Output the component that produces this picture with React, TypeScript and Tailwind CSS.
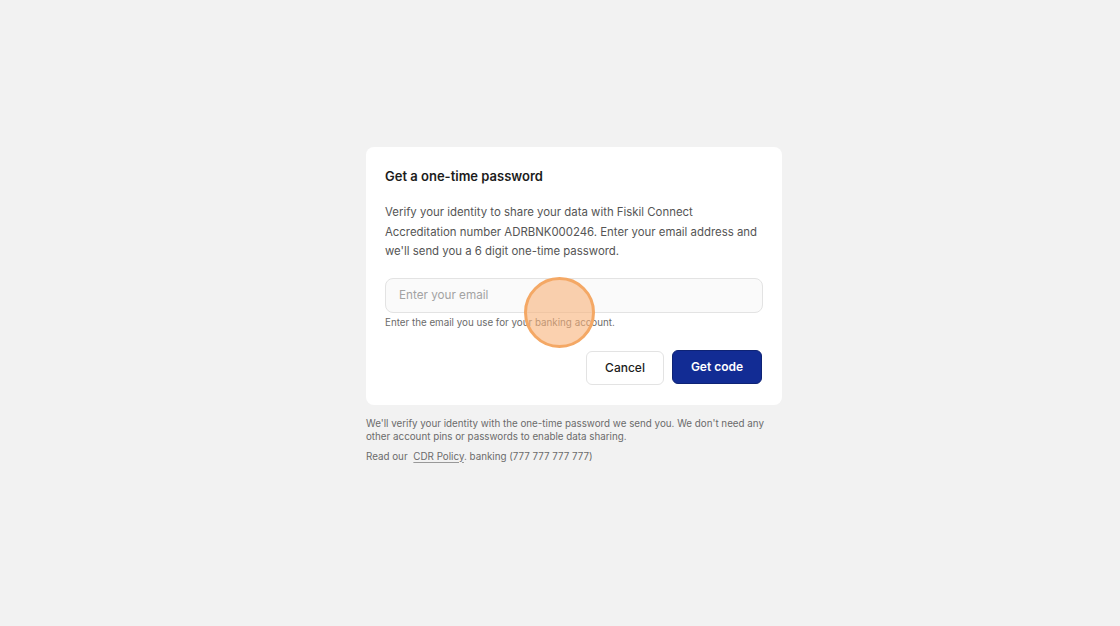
import React from "react";

export default function App() {
  return (
    <div
      className="w-full min-h-[626px] bg-[#f2f2f2] flex justify-center pt-[147px] pl-[28px]"
      style={{ fontFamily: "Inter, 'Noto Sans', sans-serif" }}
    >
      <div className="w-[416px] flex flex-col">
        <div className="bg-white rounded-lg px-[19px] pt-[20px] pb-[20px] flex flex-col">
          <h1 className="text-[13px] leading-[18px] font-semibold text-[#1c1c1c]">
            Get a one-time password
          </h1>
          <p className="mt-[18px] mr-[-8px] text-[11.4px] leading-[19.5px] text-[#555555]">
            Verify your identity to share your data with Fiskil Connect
            <br />
            Accreditation number ADRBNK000246. Enter your email address and we'll send you a 6 digit one-time password.
          </p>
          <div className="relative mt-[16px]">
            <input
              placeholder="Enter your email"
              className="w-full h-[35px] rounded-lg border border-[#e3e3e3] bg-[#fafafa] px-[13px] text-[11.7px] text-[#333] placeholder:text-[#a3a3a3] outline-none"
            />
            <div className="absolute left-[139px] top-[-1px] w-[71px] h-[71px] rounded-full bg-[#f9b27a]/60 border-[3px] border-[#f4a865] pointer-events-none" />
          </div>
          <p className="mt-[2px] text-[9.8px] leading-[16px] text-[#6b6b6b]">
            Enter the email you use for your banking account.
          </p>
          <div className="flex justify-end gap-[8px] mt-[19px] mr-[1px]">
            <button className="w-[78px] h-[34px] mt-[1px] rounded-md border border-[#e3e3e3] bg-white text-[12px] font-medium text-[#1c1c1c]">
              Cancel
            </button>
            <button className="w-[90px] h-[34px] rounded-md bg-[#122c94] border border-[#0e2375] text-[12px] font-semibold text-white">
              Get code
            </button>
          </div>
        </div>
        <p className="mt-[12px] text-[9.8px] leading-[13.5px] text-[#6b6b6b]">
          We'll verify your identity with the one-time password we send you. We don't need any other account pins or
          passwords to enable data sharing.
        </p>
        <p className="mt-[6px] text-[9.8px] leading-[13.5px] text-[#6b6b6b]">
          Read our{" "}
          <a className="ml-[3px] underline underline-offset-2 decoration-[#999]">CDR Policy</a>. banking (777 777 777 777)
        </p>
      </div>
    </div>
  );
}
